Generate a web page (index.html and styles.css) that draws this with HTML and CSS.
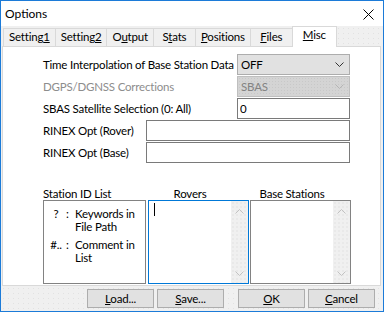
FILE: index.html
```html
<!DOCTYPE html>
<html lang="en">
<head>
    <meta charset="UTF-8">
    <title>Options</title>
    <link rel="stylesheet" href="styles.css">
</head>
<body>

<div class="window">
    <div class="titlebar">
        <span class="title">Options</span>
        <svg class="close" width="11" height="11" viewBox="0 0 11 11">
            <path d="M0.5 0.5 L10.5 10.5 M10.5 0.5 L0.5 10.5" stroke="#000" stroke-width="1" fill="none"/>
        </svg>
    </div>

    <div class="tabs">
        <div class="tab">Setting<u>1</u></div>
        <div class="tab">Setting<u>2</u></div>
        <div class="tab">O<u>u</u>tput</div>
        <div class="tab">S<u>t</u>ats</div>
        <div class="tab"><u>P</u>ositions</div>
        <div class="tab"><u>F</u>iles</div>
        <div class="tab tab-active"><u>M</u>isc</div>
    </div>

    <div class="page">
        <div class="form">
            <div class="row">
                <span>Time Interpolation of Base Station Data</span>
                <div class="combo">
                    OFF
                    <svg class="chevron" width="9" height="5" viewBox="0 0 9 5"><path d="M0.5 0.5 L4.5 4.5 L8.5 0.5" stroke="#333" fill="none"/></svg>
                </div>
            </div>
            <div class="row row-disabled">
                <span>DGPS/DGNSS Corrections</span>
                <div class="combo combo-disabled">
                    SBAS
                    <svg class="chevron" width="9" height="5" viewBox="0 0 9 5"><path d="M0.5 0.5 L4.5 4.5 L8.5 0.5" stroke="#b5b5b5" fill="none"/></svg>
                </div>
            </div>
            <div class="row">
                <span>SBAS Satellite Selection (0: All)</span>
                <input class="field field-short" type="text" value="0">
            </div>
            <div class="row">
                <span>RINEX Opt (Rover)</span>
                <input class="field field-long" type="text" value="">
            </div>
            <div class="row">
                <span>RINEX Opt (Base)</span>
                <input class="field field-long" type="text" value="">
            </div>
        </div>

        <div class="lists">
            <div class="list-col list-station">
                <div class="list-label list-label-left">Station ID List</div>
                <div class="list-box help">
                    <span class="mark">?</span><span class="colon">:</span><span class="note">Keywords in File Path</span>
                    <span class="mark">#..</span><span class="colon">:</span><span class="note">Comment in List</span>
                </div>
            </div>
            <div class="list-col list-rovers">
                <div class="list-label">Rovers</div>
                <div class="list-box list-focus">
                    <div class="list-text"><span class="caret"></span></div>
                    <div class="scrollbar">
                        <svg width="9" height="5" viewBox="0 0 9 5"><path d="M0.5 4.5 L4.5 0.5 L8.5 4.5" stroke="#c2c2c2" fill="none"/></svg>
                        <svg width="9" height="5" viewBox="0 0 9 5"><path d="M0.5 0.5 L4.5 4.5 L8.5 0.5" stroke="#c2c2c2" fill="none"/></svg>
                    </div>
                </div>
            </div>
            <div class="list-col list-base">
                <div class="list-label">Base Stations</div>
                <div class="list-box">
                    <div class="list-text"></div>
                    <div class="scrollbar">
                        <svg width="9" height="5" viewBox="0 0 9 5"><path d="M0.5 4.5 L4.5 0.5 L8.5 4.5" stroke="#c2c2c2" fill="none"/></svg>
                        <svg width="9" height="5" viewBox="0 0 9 5"><path d="M0.5 0.5 L4.5 4.5 L8.5 0.5" stroke="#c2c2c2" fill="none"/></svg>
                    </div>
                </div>
            </div>
        </div>
    </div>

    <div class="footer">
        <button class="btn btn-load"><u>L</u>oad...</button>
        <button class="btn btn-save"><u>S</u>ave...</button>
        <button class="btn btn-ok"><u>O</u>K</button>
        <button class="btn btn-cancel"><u>C</u>ancel</button>
    </div>
</div>

</body>
</html>
```

FILE: styles.css
```css
body {
    margin: 0;
    font-family: Lato, "Noto Sans", sans-serif;
    font-size: 11.5px;
    letter-spacing: -0.2px;
    color: #000;
}

.window {
    width: 384px;
    height: 312px;
    box-sizing: border-box;
    border: 1px solid #1c7bd8;
    background-color: #f0f0f0;
    background-image: radial-gradient(#e2e2e2 0.7px, transparent 0.9px);
    background-size: 5px 5px;
    display: flex;
    flex-direction: column;
}

/* title bar */
.titlebar {
    height: 25px;
    background: #fff;
    display: flex;
    align-items: center;
    justify-content: space-between;
    padding: 0 9px 0 4px;
    flex-shrink: 0;
}

.title {
    font-size: 12px;
    line-height: 16px;
    letter-spacing: 0;
}

.close {
    display: block;
    margin-top: 1px;
}

/* tab strip */
.tabs {
    height: 20px;
    display: flex;
    align-items: flex-end;
    padding-left: 2px;
    flex-shrink: 0;
}

.tab {
    height: 18px;
    min-width: 43px;
    box-sizing: border-box;
    line-height: 16px;
    padding: 0 5px;
    border: 1px solid #d9d9d9;
    border-bottom: none;
    margin-right: -1px;
    background: #f0f0f0;
    text-align: center;
    white-space: nowrap;
}

.tab u,
.btn u {
    text-decoration-thickness: 1px;
    text-underline-offset: 1px;
}

.tab-active {
    position: relative;
    height: 21px;
    min-width: 0;
    margin-bottom: -1px;
    padding: 0 10px;
    line-height: 15px;
    background: #fff;
    z-index: 1;
}

/* page */
.page {
    height: 240px;
    box-sizing: border-box;
    margin: 0 2px 0 1px;
    border: 1px solid #d9d9d9;
    background: #fff;
    padding: 7px 0 0 40px;
}

.form {
    width: 307px;
    display: flex;
    flex-direction: column;
    gap: 1px;
}

.row {
    height: 21px;
    display: flex;
    align-items: center;
    justify-content: space-between;
    white-space: nowrap;
}

.row-disabled span {
    color: #8d8d8d;
}

.combo {
    width: 113px;
    height: 21px;
    box-sizing: border-box;
    border: 1px solid #adadad;
    background: #e1e1e1;
    display: flex;
    align-items: center;
    justify-content: space-between;
    padding: 0 5px 0 3px;
}

.combo-disabled {
    border-color: #bfbfbf;
    background-color: #d4d4d4;
    background-image: radial-gradient(#c8c8c8 0.6px, transparent 0.8px);
    background-size: 3px 3px;
    color: #838383;
}

.chevron {
    display: block;
}

.field {
    height: 21px;
    box-sizing: border-box;
    border: 1px solid #7a7a7a;
    padding: 0 2px;
    margin: 0;
    font-family: Lato, "Noto Sans", sans-serif;
    font-size: 11.5px;
    color: #000;
    outline: none;
}

.field-short {
    width: 113px;
}

.field-long {
    width: 204px;
}

/* station / rover / base lists */
.lists {
    display: flex;
    margin-top: 25px;
    width: 308px;
}

.list-station {
    width: 103px;
    margin-right: 2px;
}

.list-rovers {
    width: 101px;
    margin-right: 1px;
}

.list-base {
    width: 101px;
}

.list-label {
    height: 12px;
    line-height: 12px;
    padding-right: 17px;
    text-align: center;
}

.list-label-left {
    padding-right: 0;
    text-align: left;
}

.list-box {
    height: 84px;
    box-sizing: border-box;
    border: 1px solid #828282;
    background: #fff;
    display: flex;
}

.list-focus {
    border-color: #0078d7;
}

.help {
    display: grid;
    grid-template-columns: 20px 9px 1fr;
    align-content: start;
    row-gap: 5px;
    padding: 6px 0 0 2px;
    line-height: 13px;
}

.mark {
    text-align: center;
}

.list-text {
    flex: 1;
    padding: 2px 0 0 5px;
}

.caret {
    display: block;
    width: 1px;
    height: 13px;
    background: #000;
}

.scrollbar {
    width: 17px;
    background-color: #f0f0f0;
    background-image: radial-gradient(#e0e0e0 0.6px, transparent 0.8px);
    background-size: 4px 4px;
    display: flex;
    flex-direction: column;
    justify-content: space-between;
    align-items: center;
    padding: 8px 0 7px;
}

.scrollbar svg {
    display: block;
}

/* buttons */
.footer {
    height: 25px;
    display: flex;
    justify-content: flex-end;
    align-items: flex-start;
    padding: 3px 8px 0 0;
    box-sizing: border-box;
}

.btn {
    width: 67px;
    height: 19px;
    padding: 0;
    border: 1px solid #adadad;
    background: #e1e1e1;
    font-family: Lato, "Noto Sans", sans-serif;
    font-size: 11.5px;
    letter-spacing: -0.2px;
    line-height: 15px;
    color: #000;
}

.btn-save {
    margin-left: 3px;
}

.btn-ok {
    margin-left: 14px;
}

.btn-cancel {
    margin-left: 3px;
}
```
